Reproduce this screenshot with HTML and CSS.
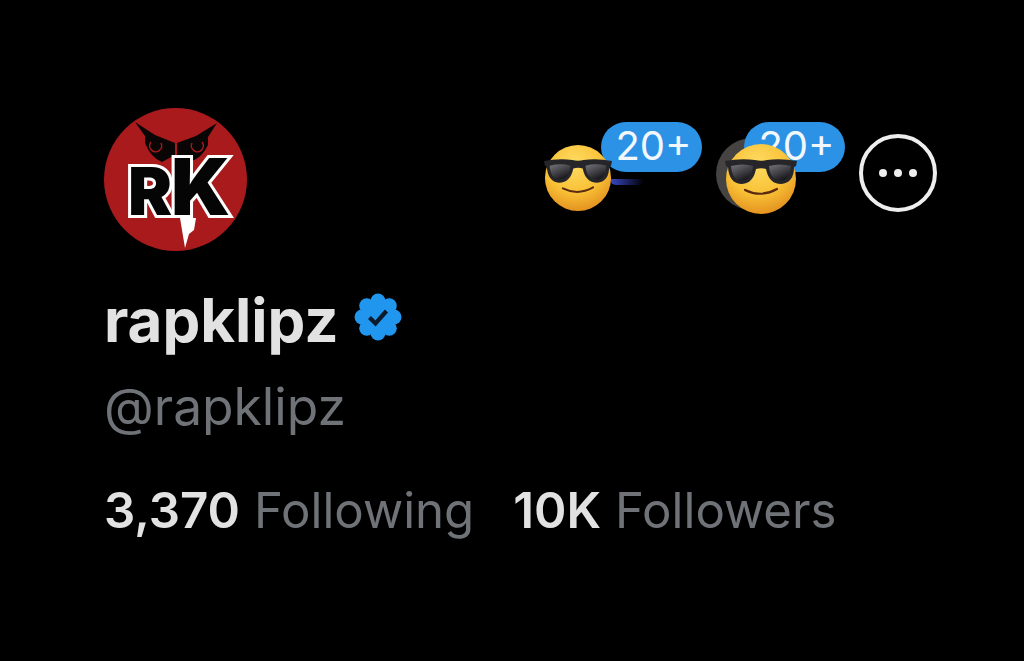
FILE: index.html
```html
<!DOCTYPE html>
<html lang="en">
<head>
<meta charset="utf-8">
<title>rapklipz</title>
<link rel="stylesheet" href="styles.css">
</head>
<body>
<svg class="defs" width="0" height="0" aria-hidden="true">
  <defs>
    <radialGradient id="face" cx="0.45" cy="0.28" r="0.8">
      <stop offset="0" stop-color="#fedb62"/>
      <stop offset="0.55" stop-color="#f9c136"/>
      <stop offset="1" stop-color="#de861a"/>
    </radialGradient>
    <linearGradient id="lens" x1="0" y1="0" x2="0.6" y2="1">
      <stop offset="0" stop-color="#75757c"/>
      <stop offset="1" stop-color="#17171b"/>
    </linearGradient>
    <symbol id="cool" viewBox="0 0 72 72">
      <circle cx="36" cy="36" r="35" fill="url(#face)"/>
      <path d="M0 18Q16 15 30 17Q36 18.500 42 17Q56 15 72 18L71 23L69 24Q69 40 56 41Q44 41 41 26Q36 24.500 31 26Q28 41 16 41Q4 40 3 24L1 23Z" fill="#26262a"/>
      <path d="M6 23Q18 20 28 23Q27 37 16 37.500Q7 37 6 23Z" fill="url(#lens)"/>
      <path d="M44 23Q55 20 66 23Q65 37 56 37.500Q45 37 44 23Z" fill="url(#lens)"/>
      <path d="M20 47Q36 55 52 46" fill="none" stroke="#5a2a12" stroke-width="2.200" stroke-linecap="round"/>
    </symbol>
  </defs>
</svg>
<main class="profile">
  <header class="top">
    <svg class="avatar" viewBox="0 0 143 143" role="img" aria-label="RK logo">
      <circle cx="71.500" cy="71.500" r="71.500" fill="#a81a1c"/>
      <path d="M31 14L51 27L71 35V47L58 54Q47 50 41 35V28Z" fill="#0b0606"/>
      <path d="M113 15L92 28L73 35V47L86 54Q98 50 104 37V29Z" fill="#0b0606"/>
      <path d="M47 34A6 6 0 1 0 57 35" fill="none" stroke="#a81a1c" stroke-width="1.500"/>
      <path d="M88 35A6 6 0 1 0 98 34" fill="none" stroke="#a81a1c" stroke-width="1.500"/>
      <path d="M76 110H92L90 122L85 126L81 140Z" fill="#fff"/>
      <text class="logo" x="24" y="107">R</text>
      <text class="logo logo-k" x="67" y="107">K</text>
    </svg>
    <div class="actions">
      <div class="action action-first">
        <svg class="emoji emoji-small"><use href="#cool"/></svg>
        <span class="streak" aria-hidden="true"></span>
        <span class="pill">20+</span>
      </div>
      <div class="action action-second">
        <span class="shadow-disc"></span>
        <span class="pill">20+</span>
        <svg class="emoji emoji-large"><use href="#cool"/></svg>
      </div>
      <button class="more" type="button" aria-label="More">
        <span class="dot"></span><span class="dot"></span><span class="dot"></span>
      </button>
    </div>
  </header>
  <h1 class="name">rapklipz
    <svg class="verified" viewBox="0 0 48 48" aria-label="Verified">
      <g fill="#2196ef">
        <circle cx="24" cy="24" r="18"/>
        <circle cx="24" cy="8" r="7.500"/>
        <circle cx="35.300" cy="12.700" r="7.500"/>
        <circle cx="40" cy="24" r="7.500"/>
        <circle cx="35.300" cy="35.300" r="7.500"/>
        <circle cx="24" cy="40" r="7.500"/>
        <circle cx="12.700" cy="35.300" r="7.500"/>
        <circle cx="8" cy="24" r="7.500"/>
        <circle cx="12.700" cy="12.700" r="7.500"/>
      </g>
      <path d="M15.500 24.500L21.500 30.500L32.500 18" fill="none" stroke="#0c1a2a" stroke-width="4.200"/>
    </svg>
  </h1>
  <p class="handle">@rapklipz</p>
  <p class="stats">
    <span class="stat"><b>3,370</b> Following</span>
    <span class="stat"><b>10K</b> Followers</span>
  </p>
</main>
</body>
</html>
```
FILE: styles.css
```css
* { box-sizing: border-box; }
html, body { margin: 0; height: 100%; }
body {
  background: #000;
  font-family: Inter, "Liberation Sans", Arial, sans-serif;
  overflow: hidden;
}
.defs { display: block; height: 0; }
.profile { padding: 108px 87px 0 104px; }
.top {
  display: flex;
  justify-content: space-between;
  align-items: flex-start;
  height: 143px;
}
.avatar { width: 143px; height: 143px; display: block; }
.logo {
  font-family: Inter, "Liberation Sans", Arial, sans-serif;
  font-weight: 900;
  font-size: 66px;
  fill: #050505;
  stroke: #fff;
  stroke-width: 6px;
  paint-order: stroke;
}
.logo-k { font-size: 78px; }
.actions {
  display: flex;
  align-items: flex-start;
  margin-top: 14px;
}
.action { position: relative; height: 94px; }
.action-first { width: 159px; }
.action-second { width: 156px; }
.pill {
  position: absolute;
  top: 0;
  height: 50px;
  width: 101px;
  padding-left: 4px;
  border-radius: 25px;
  background: #2c92e6;
  color: #f2f7fb;
  font-size: 40px;
  line-height: 48px;
  text-align: center;
}
.action-first .pill { left: 57px; }
.action-second .pill { left: 41px; }
.emoji { position: absolute; display: block; z-index: 1; }
.emoji-small { left: 0; top: 22px; width: 68px; height: 68px; }
.emoji-large { left: 22px; top: 21px; width: 72px; height: 72px; }
.shadow-disc {
  position: absolute;
  left: 13px;
  top: 16px;
  width: 72px;
  height: 72px;
  border-radius: 50%;
  background: #454442;
}
.streak {
  position: absolute;
  left: 66px;
  top: 57px;
  width: 34px;
  height: 6px;
  background: linear-gradient(90deg, #3a48c8, #12186000);
  border-radius: 0 0 6px 6px;
}
.more {
  width: 78px;
  height: 78px;
  margin-top: 12px;
  border: 4px solid #eee;
  border-radius: 50%;
  background: transparent;
  padding: 0;
  display: flex;
  align-items: center;
  justify-content: center;
  gap: 7px;
}
.dot { width: 8px; height: 8px; border-radius: 50%; background: #eee; }
.name {
  margin: 39px 0 0;
  display: flex;
  align-items: center;
  gap: 15px;
  height: 60px;
  color: #e2e2e2;
  font-size: 60px;
  line-height: 60px;
  font-weight: 700;
}
.verified { width: 48px; height: 48px; flex: none; margin-top: -7px; }
.handle {
  margin: 28px 0 0;
  color: #6f7378;
  font-size: 51.500px;
  line-height: 56px;
}
.stats {
  margin: 48px 0 0;
  display: flex;
  gap: 39px;
  color: #6f7378;
  font-size: 49.200px;
  line-height: 56px;
}
.stat b { font-weight: 600; color: #e2e2e2; }
```
